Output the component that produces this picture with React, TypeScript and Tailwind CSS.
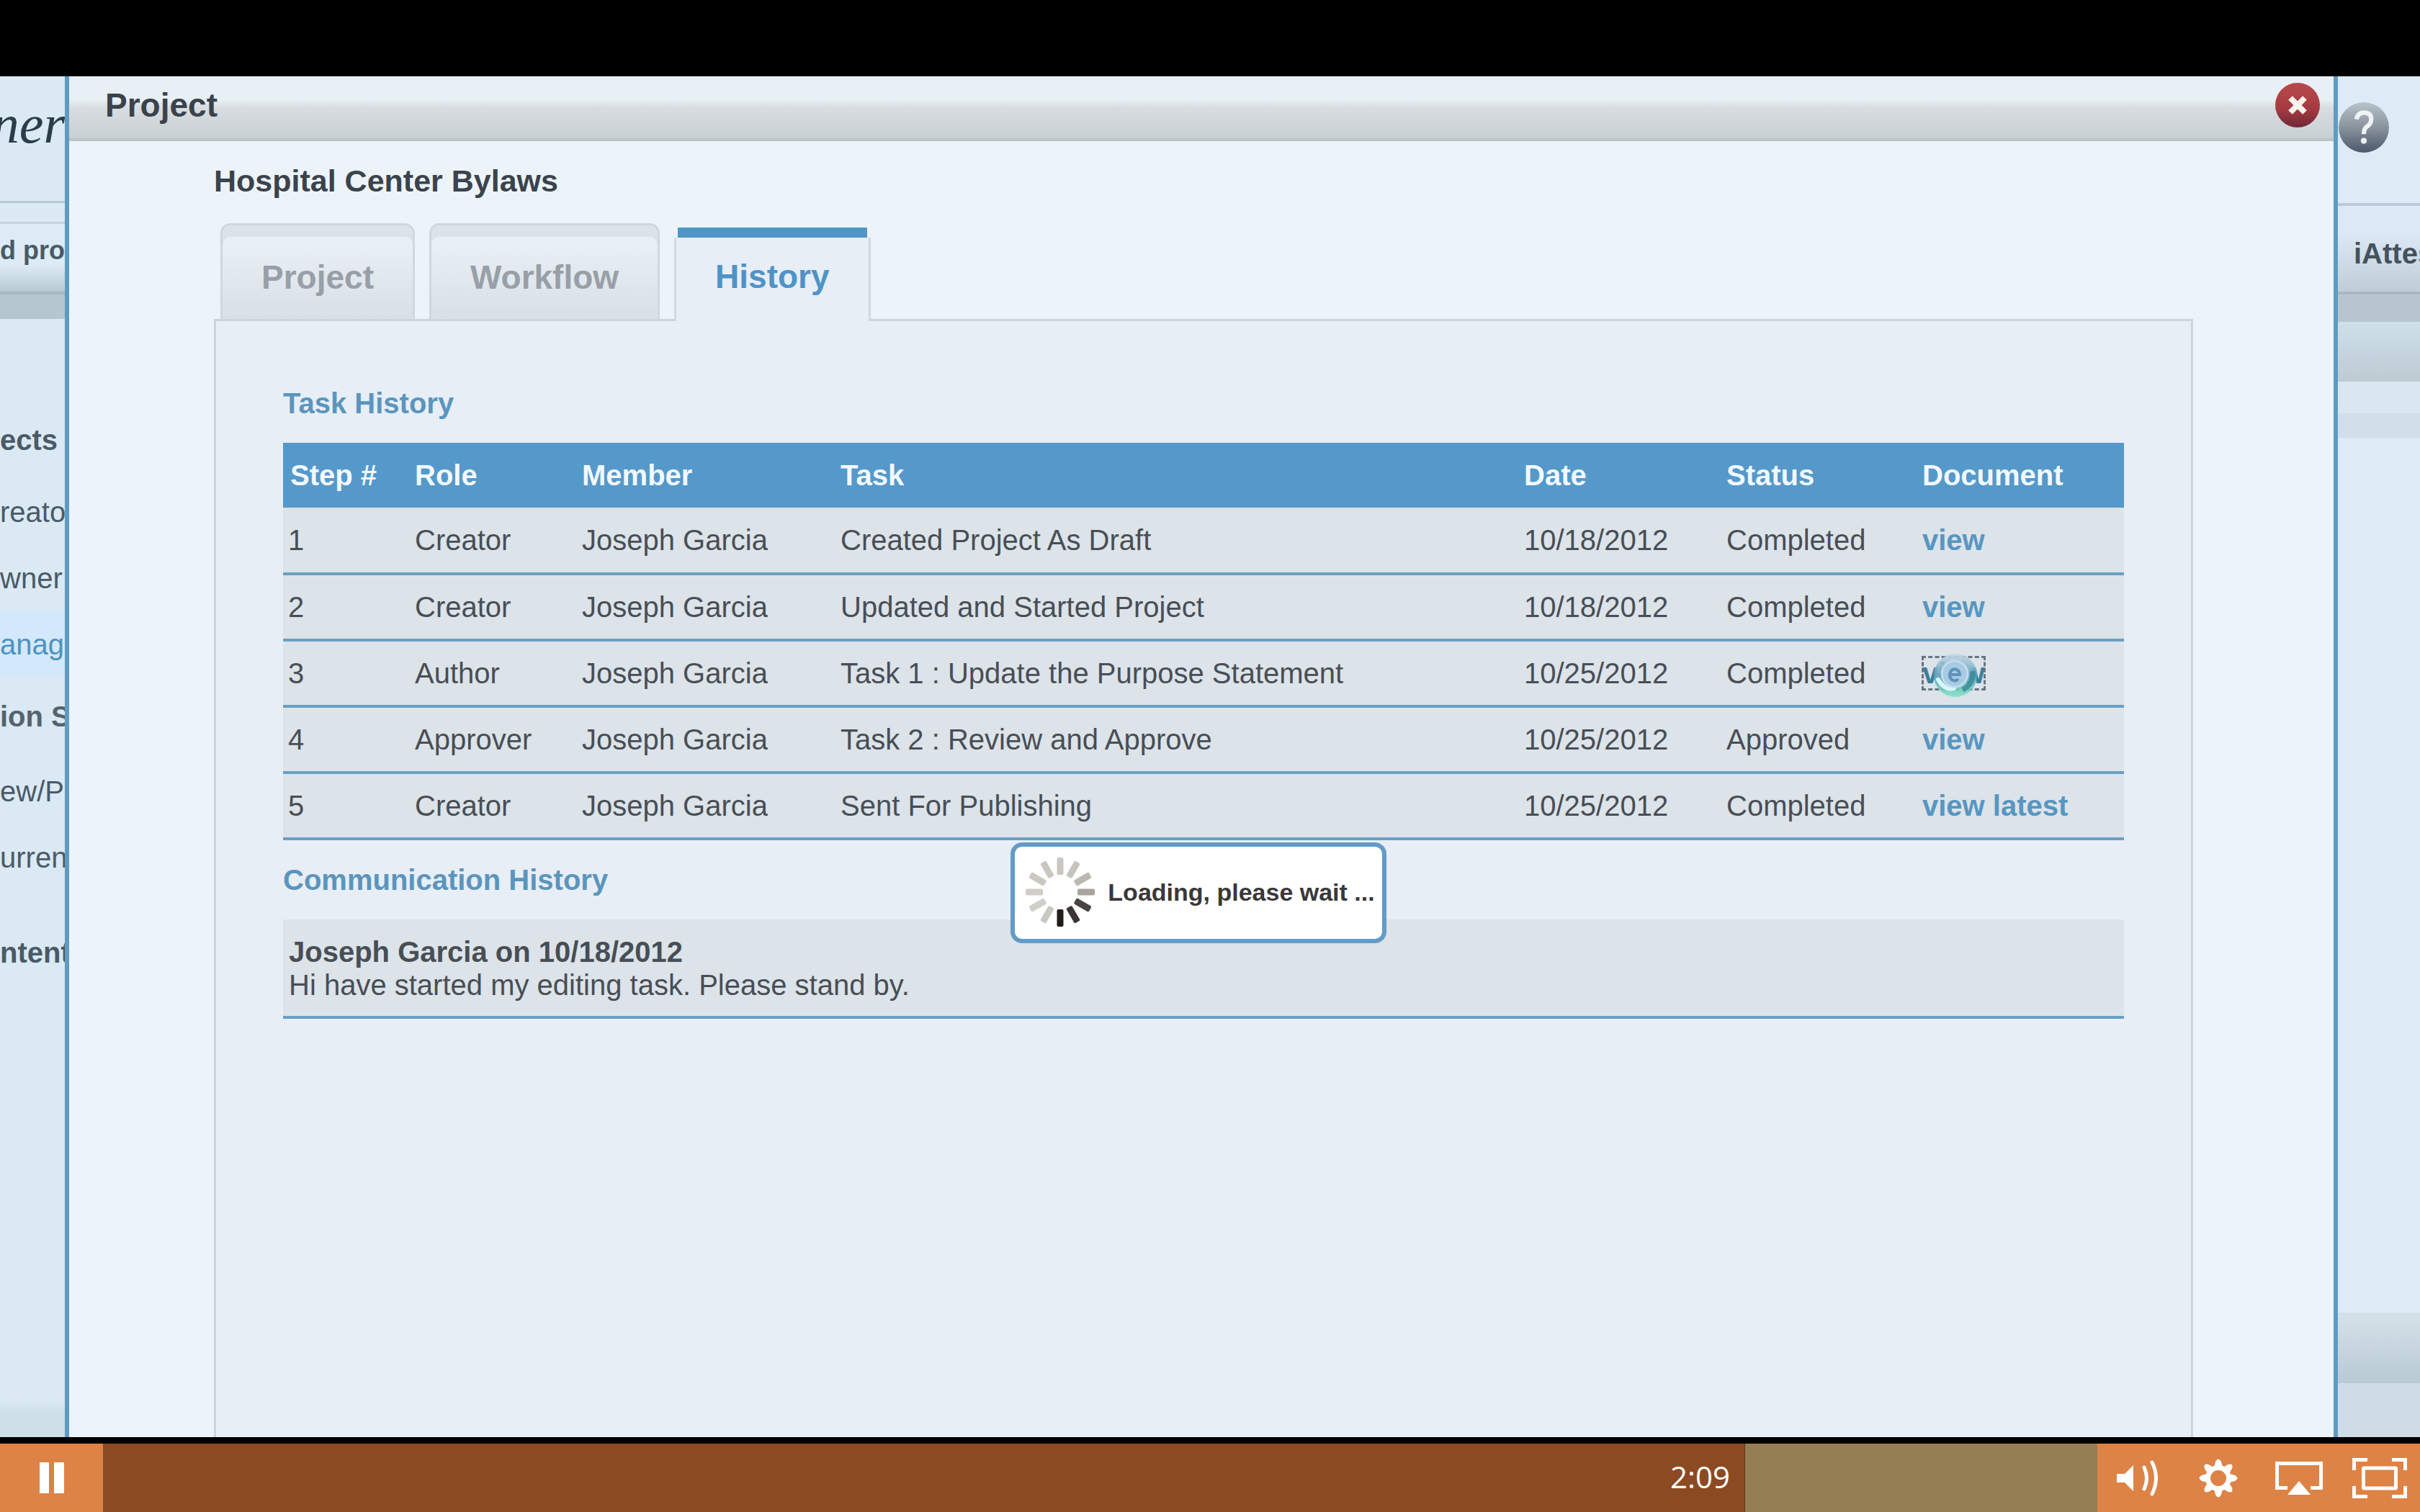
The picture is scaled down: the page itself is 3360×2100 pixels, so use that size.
import React from 'react';

interface TaskRow {
  step: number;
  role: string;
  member: string;
  task: string;
  date: string;
  status: string;
  link: string;
  busy?: boolean;
}

const tasks: TaskRow[] = [
  { step: 1, role: 'Creator', member: 'Joseph Garcia', task: 'Created Project As Draft', date: '10/18/2012', status: 'Completed', link: 'view' },
  { step: 2, role: 'Creator', member: 'Joseph Garcia', task: 'Updated and Started Project', date: '10/18/2012', status: 'Completed', link: 'view' },
  { step: 3, role: 'Author', member: 'Joseph Garcia', task: 'Task 1 : Update the Purpose Statement', date: '10/25/2012', status: 'Completed', link: 'view', busy: true },
  { step: 4, role: 'Approver', member: 'Joseph Garcia', task: 'Task 2 : Review and Approve', date: '10/25/2012', status: 'Approved', link: 'view' },
  { step: 5, role: 'Creator', member: 'Joseph Garcia', task: 'Sent For Publishing', date: '10/25/2012', status: 'Completed', link: 'view latest' },
];

const columns = [
  { label: 'Step #', width: 'w-[173px]' },
  { label: 'Role', width: 'w-[232px]' },
  { label: 'Member', width: 'w-[359px]' },
  { label: 'Task', width: '' },
  { label: 'Date', width: 'w-[281px]' },
  { label: 'Status', width: 'w-[272px]' },
  { label: 'Document', width: 'w-[290px]' },
];

const sideLinks = [
  { label: 'ects', className: 'font-bold text-[#4b5a66]' },
  { label: 'reato', className: 'mt-2 text-[#4b5a66]' },
  { label: 'wner', className: 'text-[#4b5a66]' },
  { label: 'anag', className: 'bg-[#d3e8fb] text-[#4f93bd]' },
  { label: 'ion S', className: 'mt-2 font-bold text-[#55636e]' },
  { label: 'ew/P', className: 'mt-3 text-[#4b5a66]' },
  { label: 'urren', className: 'text-[#4b5a66]' },
  { label: 'ntent', className: 'mt-10 font-bold text-[#4b5a66]' },
];

// share of the video that has been played
const elapsed = 2280;
const total = 2769;

function Spinner() {
  const shades = ['#c9c7c2', '#c6c4be', '#bcb8b2', '#a8a39d', '#4a4442', '#3b3533', '#221c1b', '#c9c8c2', '#d0cfc9', '#cfcdc8', '#cbc8c1', '#cac7bf'];
  return (
    <svg viewBox="-50 -50 100 100" className="size-[100px] shrink-0" aria-hidden="true">
      {shades.map((fill, i) => (
        <rect key={i} x="-4.5" y="-48" width="9" height="24" rx="2" fill={fill} transform={`rotate(${i * 30})`} />
      ))}
    </svg>
  );
}

function BusyPointer() {
  return (
    <svg viewBox="0 0 64 64" className="absolute -top-[6px] left-[14px] size-[64px]" aria-hidden="true">
      <defs>
        <linearGradient id="busy" x1="0" y1="0" x2="0" y2="1">
          <stop offset="0" stopColor="#c8dbe9" />
          <stop offset="0.5" stopColor="#5d9fb9" />
          <stop offset="1" stopColor="#7fe6c4" />
        </linearGradient>
      </defs>
      <circle cx="32" cy="32" r="30" fill="url(#busy)" opacity="0.9" />
      <path d="M42 52 A24 24 0 0 0 56 26" fill="none" stroke="#2f8290" strokeWidth="7" opacity="0.7" />
      <path d="M8 38 Q18 54 30 50" fill="none" stroke="#d9f7fa" strokeWidth="6" strokeLinecap="round" />
      <circle cx="31" cy="30" r="18" fill="#a6cbe2" stroke="#c3dcec" strokeWidth="3" />
      <path d="M25 31 H38 A7 8 0 1 0 36 37" fill="none" stroke="#5b93b8" strokeWidth="4" />
    </svg>
  );
}

function LeftStrip() {
  return (
    <aside className="flex w-[90px] shrink-0 flex-col overflow-hidden bg-[#dae9f3] text-[40px] leading-[46px] whitespace-nowrap">
      <div className="flex h-[176px] justify-end border-b-[3px] border-[#b9cad6] pt-[22px] font-['Liberation_Serif',serif] text-[76px] leading-[88px] text-[#2b3d48] italic">
        ner
      </div>
      <div className="h-[29px] border-b-[3px] border-[#c4d3dd]" />
      <div className="flex h-[98px] justify-end border-b-[4px] border-[#a7b8c3] bg-linear-to-b from-[#dcebf5] from-60% to-[#b9c9d3] pt-[14px] text-[36px] font-bold text-[#4b5a66]">
        d pro
      </div>
      <div className="h-[34px] bg-[#b6c6d0]" />
      <nav className="flex flex-1 flex-col pt-[122px]">
        {sideLinks.map((link) => (
          <a key={link.label} href="#" className={`flex h-[92px] items-center ${link.className}`}>
            {link.label}
          </a>
        ))}
      </nav>
      <div className="h-[50px] bg-linear-to-b from-[#dae9f3] to-[#cfdfe8] to-30%" />
    </aside>
  );
}

function RightStrip() {
  return (
    <aside className="flex w-[114px] shrink-0 flex-col overflow-hidden bg-[#dcebf5] whitespace-nowrap">
      <div className="h-[180px] border-b-[4px] border-[#bccad6] pt-[35px]">
        <button aria-label="Help" className="block size-[72px]">
          <svg viewBox="0 0 70 70">
            <defs>
              <linearGradient id="help" x1="0" y1="0" x2="0" y2="1">
                <stop offset="0" stopColor="#b9c3ca" />
                <stop offset="0.5" stopColor="#89939c" />
                <stop offset="1" stopColor="#4b586b" />
              </linearGradient>
            </defs>
            <circle cx="35" cy="35" r="34" fill="url(#help)" />
            <path d="M25 24 Q27 15 35 15 Q45 15 45 24 Q45 30 39 34 Q35 37 35 44" fill="none" stroke="#eef3f6" strokeWidth="6" />
            <circle cx="35" cy="53" r="4" fill="#eef3f6" />
          </svg>
        </button>
      </div>
      <div className="h-[123px] border-b-[4px] border-[#a9b8c3] bg-linear-to-b from-[#dde9f6] from-30% to-[#c0cdd6] pt-[43px] pl-[22px] text-[40px] leading-[46px] font-bold text-[#44525d]">
        iAttes
      </div>
      <div className="h-[38px] bg-[#b7c5cf]" />
      <div className="h-[83px] bg-linear-to-b from-[#cfe0e8] to-[#bdcbd3]" />
      <div className="h-[44px] bg-[#d9e8f0]" />
      <div className="h-[34px] bg-[#d1dfea]" />
      <div className="flex-1" />
      <div className="h-[98px] border-t-[4px] border-[#d0dfe8] bg-linear-to-b from-[#d3e1e8] to-[#b9c9d4]" />
      <div className="h-[75px] bg-[#cddce6]" />
    </aside>
  );
}

function Tab({ label }: { label: string }) {
  return (
    <button className="h-[133px] rounded-t-[14px] border-x-[3px] border-t-[3px] border-[#d0d7de] bg-linear-to-b from-[#e9eff6] from-20% to-[#d8dfe5] px-[54px] pt-[14px] text-[46px] leading-[52px] font-bold text-[#989fa7] shadow-[inset_0_16px_0_#dce2e9]">
      {label}
    </button>
  );
}

function TaskTable() {
  return (
    <table className="w-full table-fixed border-collapse text-left text-[40px] leading-[46px]">
      <thead>
        <tr className="h-[90px] bg-[#5599ca] text-[#f2f8fd]">
          {columns.map((col) => (
            <th key={col.label} className={`py-0 pr-0 pl-[10px] font-bold ${col.width}`}>{col.label}</th>
          ))}
        </tr>
      </thead>
      <tbody>
        {tasks.map((row) => (
          <tr key={row.step} className="h-[92px] border-b-[4px] border-[#6b9fc4] bg-[#dce3e9] text-[#484e55]">
            <td className="pl-[7px]">{row.step}</td>
            <td className="pl-[10px]">{row.role}</td>
            <td className="pl-[10px]">{row.member}</td>
            <td className="pl-[10px]">{row.task}</td>
            <td className="pl-[10px]">{row.date}</td>
            <td className="pl-[10px]">{row.status}</td>
            <td className="pl-[10px]">
              {row.busy ? (
                <a href="#" className="relative inline-block font-bold text-[#3c7f9c] outline-3 -outline-offset-2 outline-dashed outline-[#66757f]">
                  {row.link}
                  <BusyPointer />
                </a>
              ) : (
                <a href="#" className="font-bold text-[#5796c2]">{row.link}</a>
              )}
            </td>
          </tr>
        ))}
      </tbody>
    </table>
  );
}

function ProjectDialog() {
  return (
    <section role="dialog" aria-label="Project" className="relative flex min-w-0 flex-1 flex-col border-x-[6px] border-[#5f9bc1] bg-[#ecf4f9]">
      <header className="flex h-[90px] items-center justify-between border-b-[4px] border-[#bdc5ca] bg-linear-to-b from-[#e8f0f5] from-38% via-[#d7dde0] via-50% to-[#c9d0d4] pr-[18px] pb-1.5 pl-[50px]">
        <h1 className="text-[46px] leading-[52px] font-bold text-[#3b424b]">Project</h1>
        <button aria-label="Close" className="size-[64px]">
          <svg viewBox="0 0 64 64">
            <defs>
              <linearGradient id="close" x1="0" y1="0" x2="0" y2="1">
                <stop offset="0" stopColor="#b94a4c" />
                <stop offset="0.6" stopColor="#a33a40" />
                <stop offset="1" stopColor="#6f2738" />
              </linearGradient>
            </defs>
            <circle cx="32" cy="32" r="31" fill="url(#close)" />
            <path d="M22 22 L42 42 M42 22 L22 42" stroke="#fbf3ee" strokeWidth="8" />
          </svg>
        </button>
      </header>

      <div className="flex flex-1 flex-col pr-[195px] pl-[201px]">
        <h2 className="mt-8 text-[43px] leading-[46px] font-bold text-[#3b434c]">Hospital Center Bylaws</h2>

        <div className="mt-9 flex items-end gap-5 pl-[9px]">
          <Tab label="Project" />
          <Tab label="Workflow" />
          <button className="relative -mb-[3px] flex h-[130px] flex-col items-stretch text-[46px] leading-[52px] font-bold text-[#4f93c6]">
            <span className="mx-[5px] h-[14px] bg-[#5096c6]" />
            <span className="flex-1 border-x-[3px] border-[#d0d9e0] bg-[#e7eef6] px-[54px] pt-[28px]">History</span>
          </button>
        </div>

        <div className="flex-1 border-x-[3px] border-t-[3px] border-[#cdd5db] bg-[#e7eef6] px-[93px] pt-[91px]">
          <h3 className="mb-8 text-[40px] leading-[46px] font-bold text-[#5b95bd]">Task History</h3>
          <TaskTable />
          <h3 className="my-8 text-[40px] leading-[46px] font-bold text-[#5b95bd]">Communication History</h3>
          <article className="border-b-[4px] border-[#6b9fc4] bg-[#dce3e9] px-2 pt-[22px] pb-5 text-[40px] leading-[46px] text-[#484e55]">
            <p className="font-bold">Joseph Garcia on 10/18/2012</p>
            <p>Hi have started my editing task. Please stand by.</p>
          </article>
        </div>
      </div>

      <div className="absolute inset-x-0 top-[1064px] flex justify-center pr-[8px]">
        <div role="status" className="flex h-[140px] items-center gap-4 rounded-[16px] border-[6px] border-[#639bc8] bg-white pr-[10px] pb-[2px] pl-[13px] text-[34px] leading-[40px] font-bold text-[#3a3839]">
          <Spinner />
          <span>Loading, please wait ...</span>
        </div>
      </div>
    </section>
  );
}

function PlayerBar() {
  return (
    <footer className="flex h-[95px] items-stretch bg-[#dd8346] text-white">
      <button aria-label="Pause" className="flex w-[143px] items-center justify-center">
        <svg viewBox="0 0 34 43" className="h-[43px] w-[34px]" fill="currentColor">
          <rect width="13" height="43" />
          <rect x="20" width="14" height="43" />
        </svg>
      </button>
      <div className="relative flex flex-1 bg-[#957e53]">
        <div
          className="flex items-center justify-end border-r border-[#5f3a1c] bg-[#8c4a22] pr-5 pb-1 font-['Open_Sans',sans-serif] text-[42px] leading-[48px]"
          style={{ width: `${(elapsed / total) * 100}%` }}
        >
          2:09
        </div>
        <input type="range" aria-label="Seek" min={0} max={total} defaultValue={elapsed} className="absolute inset-0 h-full w-full opacity-0" />
      </div>
      <button aria-label="Volume" className="flex w-[112px] items-center justify-center">
        <svg viewBox="0 0 58 50" className="h-[50px] w-[58px]" fill="none" stroke="currentColor" strokeLinecap="round">
          <path d="M0 19 H11 L23 7 V43 L11 31 H0 Z" fill="currentColor" stroke="none" />
          <path d="M38 10 Q45 25 38 40" strokeWidth="5" />
          <path d="M49 3 Q60 25 49 47" strokeWidth="5" />
        </svg>
      </button>
      <button aria-label="Settings" className="flex w-[112px] items-center justify-center">
        <svg viewBox="-27 -27 54 54" className="size-[54px]" fill="none" stroke="currentColor">
          <circle r="14.5" strokeWidth="7" />
          {[0, 45, 90, 135, 180, 225, 270, 315].map((angle) => (
            <path key={angle} d="M-6 -15 L-4 -23 Q0 -30 4 -23 L6 -15 Z" fill="currentColor" stroke="none" transform={`rotate(${angle})`} />
          ))}
        </svg>
      </button>
      <button aria-label="AirPlay" className="flex w-[112px] items-center justify-center">
        <svg viewBox="0 0 66 46" className="h-[46px] w-[66px]" fill="currentColor">
          <path d="M0 0 H66 V39 H49 V34 H61 V5 H5 V34 H17 V39 H0 Z" />
          <path d="M33 27 L49 46 H17 Z" />
        </svg>
      </button>
      <button aria-label="Full screen" className="flex w-[112px] items-center justify-center">
        <svg viewBox="0 0 76 56" className="h-[56px] w-[76px]" fill="none" stroke="currentColor" strokeWidth="5">
          <path d="M21 2.5 H2.5 V17" />
          <path d="M55 2.5 H73.5 V17" />
          <path d="M21 53.5 H2.5 V39" />
          <path d="M55 53.5 H73.5 V39" />
          <rect x="15.5" y="14" width="45" height="28" rx="1" />
        </svg>
      </button>
    </footer>
  );
}

export default function App() {
  return (
    <div className="flex min-h-screen flex-col bg-black pt-[106px] font-['Liberation_Sans',Arial,sans-serif]">
      <main className="mb-[9px] flex flex-1">
        <LeftStrip />
        <ProjectDialog />
        <RightStrip />
      </main>
      <PlayerBar />
    </div>
  );
}
